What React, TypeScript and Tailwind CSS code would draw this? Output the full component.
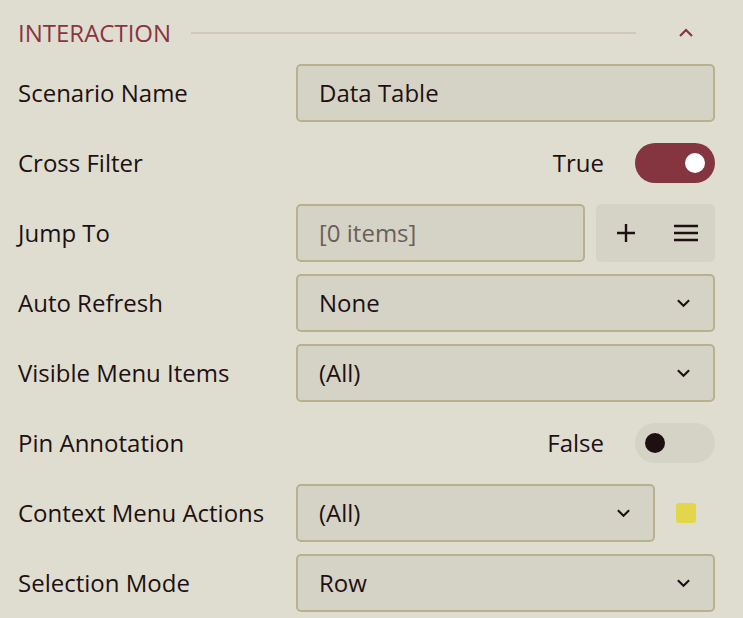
import React from "react";

const Chevron = ({ up = false, className = "" }: { up?: boolean; className?: string }) => (
  <svg width="16" height="10" viewBox="0 0 16 10" className={className}>
    <path
      d={up ? "M2 8 L8 2 L14 8" : "M2 2 L8 8 L14 2"}
      fill="none"
      stroke="currentColor"
      strokeWidth="2.2"
    />
  </svg>
);

const Label = ({ children }: { children: React.ReactNode }) => (
  <div className="text-[24px] text-[#1e1012] leading-none">{children}</div>
);

const Box = ({ children, className = "" }: { children: React.ReactNode; className?: string }) => (
  <div
    className={`h-[58px] border-2 border-[#b8b08f] bg-[#d5d3c6] rounded-[5px] flex items-center pl-[21px] pr-[22px] text-[24px] text-[#1e1012] ${className}`}
  >
    {children}
  </div>
);

const Select = ({ value, className = "" }: { value: string; className?: string }) => (
  <Box className={`justify-between ${className}`}>
    <span>{value}</span>
    <Chevron className="text-[#1e1012] w-[15px]" />
  </Box>
);

const Toggle = ({ on, text }: { on: boolean; text: string }) => (
  <div className="flex items-center justify-end gap-[31px] h-[58px]">
    <span className="text-[24px] text-[#1e1012]">{text}</span>
    <div
      className={`w-[80px] h-[40px] rounded-full flex items-center px-[10px] ${
        on ? "bg-[#853540] justify-end" : "bg-[#d5d3c6] justify-start"
      }`}
    >
      <div className={`w-[20px] h-[20px] rounded-full ${on ? "bg-white" : "bg-[#1e1012]"}`} />
    </div>
  </div>
);

export default function App() {
  return (
    <div
      className="w-[743px] h-[618px] bg-[#dfddd0] pl-[18px] pr-[28px] pt-[14px] overflow-hidden"
      style={{ fontFamily: '"Open Sans", "Noto Sans", sans-serif' }}
    >
      <div className="flex items-center h-[38px]">
        <span className="text-[24px] text-[#8a3442] leading-none">INTERACTION</span>
        <div className="ml-[20px] w-[445px] h-[2px] bg-[#d0c8ba]" />
        <div className="flex-1 flex justify-center pl-[20px] text-[#8a3442]">
          <Chevron up className="w-[16px]" />
        </div>
      </div>
      <div className="grid grid-cols-[278px_1fr] gap-y-[12px] items-center mt-[12px]">
        <Label>Scenario Name</Label>
        <Box>Data Table</Box>

        <Label>Cross Filter</Label>
        <Toggle on text="True" />

        <Label>Jump To</Label>
        <div className="flex gap-[11px]">
          <Box className="flex-1 text-[#6b5f5c]">[0 items]</Box>
          <div className="w-[119px] h-[58px] bg-[#d5d3c6] rounded-[5px] flex items-center justify-between pl-[19px] pr-[16px]">
            <svg width="22" height="22" viewBox="0 0 22 22">
              <path d="M11 2 V20 M2 11 H20" stroke="#1e1012" strokeWidth="2.4" />
            </svg>
            <svg width="26" height="20" viewBox="0 0 26 20">
              <path d="M1 3 H25 M1 10 H25 M1 17 H25" stroke="#1e1012" strokeWidth="2.4" />
            </svg>
          </div>
        </div>

        <Label>Auto Refresh</Label>
        <Select value="None" />

        <Label>Visible Menu Items</Label>
        <Select value="(All)" />

        <Label>Pin Annotation</Label>
        <Toggle on={false} text="False" />

        <Label>Context Menu Actions</Label>
        <div className="flex items-center gap-[21px]">
          <Select value="(All)" className="flex-1" />
          <div className="w-[20px] h-[20px] rounded-[3px] bg-[#e3d64a] mr-[19px]" />
        </div>

        <Label>Selection Mode</Label>
        <Select value="Row" />
      </div>
    </div>
  );
}
